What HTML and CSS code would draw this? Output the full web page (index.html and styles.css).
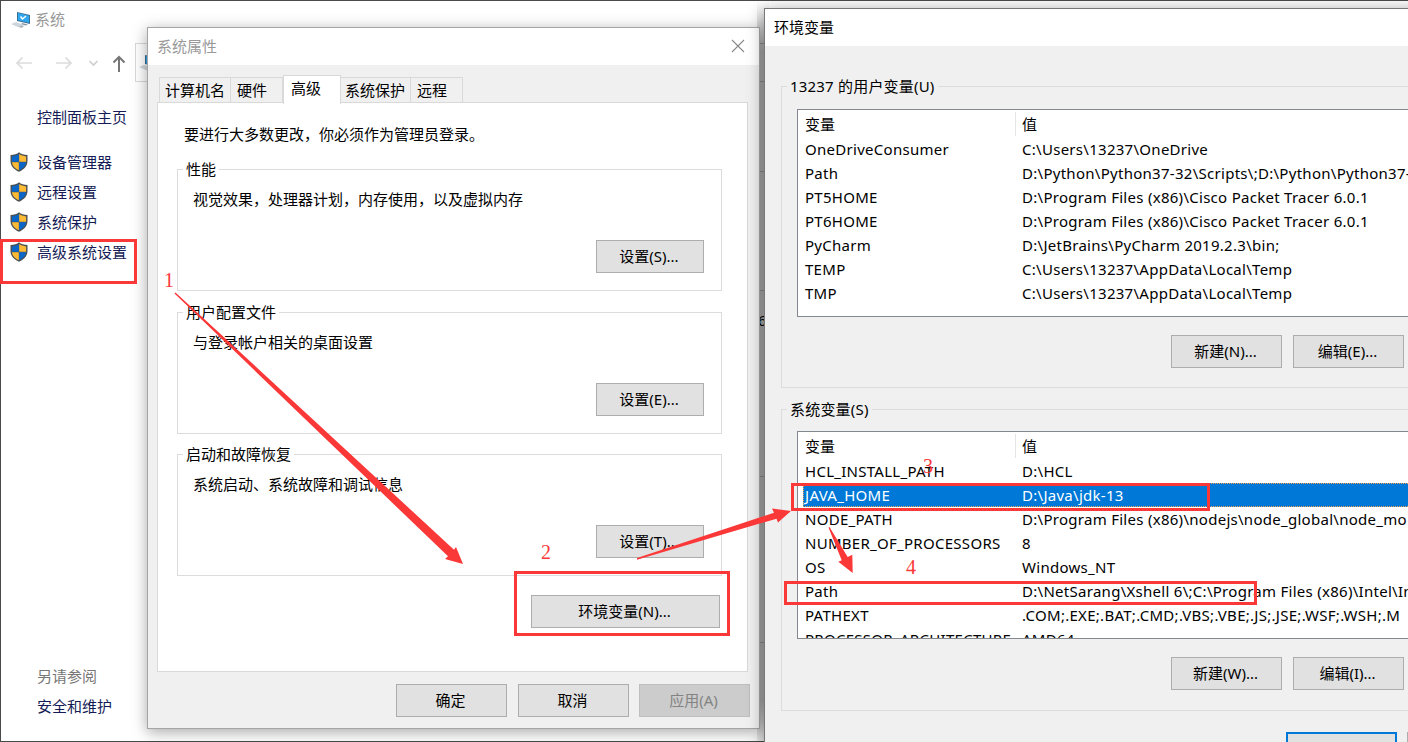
FILE: index.html
```html
<!DOCTYPE html>
<html lang="zh-CN">
<head>
    <meta charset="UTF-8">
    <title>环境变量</title>
    <link rel="stylesheet" href="styles.css">
</head>
<body>

    <svg class="defs" width="0" height="0">
        <symbol id="pc" viewBox="0 0 20 18">
            <path d="M6 1l13 3v9L6 10z" fill="#3a6f96"/>
            <path d="M7 2l11 2.700v7L7 9.200z" fill="#2fa8f0"/>
            <path d="M9.500 5.500l2 2.500 3.500-3" fill="none" stroke="#fff" stroke-width="1.500"/>
            <path d="M11 12l6 1.500-2 1-5-1z" fill="#8b98a3"/>
            <path d="M0 13l5-2 8 3-5 2.500z" fill="#cfd6db"/>
            <path d="M8 15.500l3-1 2 1-3 1.500z" fill="#aab3bb"/>
        </symbol>
        <symbol id="shield" viewBox="0 0 18 20">
            <path d="M9 .300C7 2.100 4 3 .500 3.100V9c0 5 3.500 8.500 8.500 10.800C14 17.500 17.500 14 17.500 9V3.100C14 3 11 2.100 9 .300z" fill="#4d5052"/>
            <path d="M8.800 2C7 3.300 4.500 4.200 1.900 4.400v5.400h6.900z" fill="#0a66c8"/>
            <path d="M9.200 2c1.800 1.300 4.300 2.200 6.900 2.400v5.400H9.200z" fill="#fdbb35"/>
            <path d="M1.900 10.200c.4 3.600 2.900 6.200 6.900 8.100v-8.100z" fill="#fdbb35"/>
            <path d="M16.100 10.200c-.4 3.600-2.900 6.200-6.900 8.100v-8.100z" fill="#0a66c8"/>
        </symbol>
    </svg>

    <!-- 系统 -->
    <div class="window sistema">
        <header class="titulo">
            <svg class="pc"><use href="#pc"/></svg>
            <span>系统</span>
        </header>
        <nav class="nav">
            <svg width="118" height="20" fill="none" stroke-width="1.700">
                <path d="M31 10H16M21.500 4.500L16 10l5.500 5.500M55 10h15M64.500 4.500L70 10l-5.500 5.500" stroke="#dcdcdc"/>
                <path d="M88.500 8l4 4 4-4" stroke="#cfcfcf"/>
            </svg>
            <svg class="subir" width="16" height="20" fill="none" stroke="#777" stroke-width="2">
                <path d="M8 19V4M2.500 9.500L8 4l5.500 5.500"/>
            </svg>
            <div class="direccion"><svg class="pc"><use href="#pc"/></svg></div>
        </nav>
        <div class="lateral">
            <a class="inicio">控制面板主页</a>
            <a><svg class="escudo"><use href="#shield"/></svg>设备管理器</a>
            <a><svg class="escudo"><use href="#shield"/></svg>远程设置</a>
            <a><svg class="escudo"><use href="#shield"/></svg>系统保护</a>
            <a><svg class="escudo"><use href="#shield"/></svg>高级系统设置</a>
            <p>另请参阅</p>
            <a class="suelto">安全和维护</a>
        </div>
        <div class="fondo">
            <i class="l1"></i><i class="l2"></i><i class="l3"></i><i class="l4"></i>
            <b>6</b>
            <i class="l5"></i><i class="l6"></i>
        </div>
    </div>

    <!-- 系统属性 -->
    <div class="window propiedades">
        <header class="titulo">
            <span>系统属性</span>
            <svg width="14" height="14" stroke="#888" stroke-width="1.100"><path d="M1 1l12 12M13 1L1 13"/></svg>
        </header>
        <div class="tabs">
            <span class="t1">计算机名</span>
            <span class="t2">硬件</span>
            <span class="activo">高级</span>
            <span class="t4">系统保护</span>
            <span class="t5">远程</span>
        </div>
        <div class="panel">
            <p class="aviso">要进行大多数更改，你必须作为管理员登录。</p>
            <fieldset>
                <legend>性能</legend>
                <p>视觉效果，处理器计划，内存使用，以及虚拟内存</p>
                <button>设置(S)...</button>
            </fieldset>
            <fieldset>
                <legend>用户配置文件</legend>
                <p>与登录帐户相关的桌面设置</p>
                <button>设置(E)...</button>
            </fieldset>
            <fieldset>
                <legend>启动和故障恢复</legend>
                <p>系统启动、系统故障和调试信息</p>
                <button>设置(T)...</button>
            </fieldset>
            <button class="entorno">环境变量(N)...</button>
        </div>
        <footer>
            <button>确定</button>
            <button>取消</button>
            <button disabled>应用(A)</button>
        </footer>
    </div>

    <!-- 环境变量 -->
    <div class="window variables">
        <header class="titulo"><span>环境变量</span></header>
        <fieldset>
            <legend>13237 的用户变量(U)</legend>
            <div class="lista">
                <div class="fila cabecera"><span>变量</span><span>值</span></div>
                <div class="fila"><span>OneDriveConsumer</span><span>C:\Users\13237\OneDrive</span></div>
                <div class="fila"><span>Path</span><span>D:\Python\Python37-32\Scripts\;D:\Python\Python37-</span></div>
                <div class="fila"><span>PT5HOME</span><span>D:\Program Files (x86)\Cisco Packet Tracer 6.0.1</span></div>
                <div class="fila"><span>PT6HOME</span><span>D:\Program Files (x86)\Cisco Packet Tracer 6.0.1</span></div>
                <div class="fila"><span>PyCharm</span><span>D:\JetBrains\PyCharm 2019.2.3\bin;</span></div>
                <div class="fila"><span>TEMP</span><span>C:\Users\13237\AppData\Local\Temp</span></div>
                <div class="fila"><span>TMP</span><span>C:\Users\13237\AppData\Local\Temp</span></div>
            </div>
            <div class="botones"><button>新建(N)...</button><button>编辑(E)...</button></div>
        </fieldset>
        <fieldset>
            <legend>系统变量(S)</legend>
            <div class="lista">
                <div class="fila cabecera"><span>变量</span><span>值</span></div>
                <div class="fila"><span>HCL_INSTALL_PATH</span><span>D:\HCL</span></div>
                <div class="fila elegida"><span>JAVA_HOME</span><span>D:\Java\jdk-13</span></div>
                <div class="fila"><span>NODE_PATH</span><span>D:\Program Files (x86)\nodejs\node_global\node_mo</span></div>
                <div class="fila"><span>NUMBER_OF_PROCESSORS</span><span>8</span></div>
                <div class="fila"><span>OS</span><span>Windows_NT</span></div>
                <div class="fila"><span>Path</span><span>D:\NetSarang\Xshell 6\;C:\Program Files (x86)\Intel\In</span></div>
                <div class="fila"><span>PATHEXT</span><span>.COM;.EXE;.BAT;.CMD;.VBS;.VBE;.JS;.JSE;.WSF;.WSH;.M</span></div>
                <div class="fila"><span>PROCESSOR_ARCHITECTURE</span><span>AMD64</span></div>
            </div>
            <div class="botones"><button>新建(W)...</button><button>编辑(I)...</button></div>
        </fieldset>
        <footer><button class="ok"></button><button></button></footer>
    </div>

    <!-- marcas rojas -->
    <div class="marca m1"></div>
    <div class="marca m2"></div>
    <div class="marca m3"></div>
    <div class="marca m4"></div>
    <svg class="flechas" width="1408" height="742" fill="#fb3838">
        <path d="M174.500 293.500L175.500 292.500 454 549.700 456 547 463 564 445 559 448 556.300z"/>
        <path d="M637 558L774 512.700 772 508.500 791 511 778 522.500 776.500 518.700 637 559.700z"/>
        <path d="M828.500 527.500L829.500 527 847.700 557 852.300 554.700 852.700 573 838.300 561.700 841.700 560.300z"/>
    </svg>
    <span class="numero n1">1</span>
    <span class="numero n2">2</span>
    <span class="numero n3">3</span>
    <span class="numero n4">4</span>

</body>
</html>
```

FILE: styles.css
```css
@charset "utf-8";

*{    box-sizing: border-box;    margin: 0px;    padding: 0px;}

body{
    position: relative;
    width: 1408px;
    height: 742px;
    overflow: hidden;
    background: #4a4a4c;
    font: 15px/20px "Noto Sans", "Noto Sans CJK SC", sans-serif;
    color: #000;
}

p, span, a, legend, button{    white-space: nowrap;}

.defs{    position: absolute;}

.window{
    position: absolute;
    overflow: hidden;
}

.titulo{
    display: flex;
    align-items: center;
    background: #fff;
    color: #999;
}

.titulo span{    padding-bottom: 2px;}

button{
    display: block;
    flex: none;
    width: 111px;
    height: 33px;
    padding: 0 2px 2px 0;
    border: 1px solid #adadad;
    background: #e1e1e1;
    font: inherit;
    color: #000;
}

button:disabled{
    border-color: #bfbfbf;
    background: #ccc;
    color: #838383;
}

fieldset{
    min-width: 0;
    border: 1px solid #dcdcdc;
}

/* ventana del sistema */
.sistema{
    left: 1px;
    top: 1px;
    width: 1407px;
    height: 740px;
    background: #fff;
}

.sistema .titulo{
    height: 38px;
    padding-left: 10px;
    gap: 4px;
}

.pc{    width: 20px;    height: 18px;}

.nav{
    display: flex;
    align-items: center;
    height: 47px;
}

.subir{    margin-left: -8px;}

.direccion{
    width: 700px;
    height: 39px;
    margin-left: 8px;
    padding: 10px 3px;
    border: 1px solid #d9d9d9;
}

.lateral{
    display: flex;
    flex-direction: column;
    padding-left: 9px;
    color: #151c55;
}

.lateral a{
    display: flex;
    align-items: center;
    gap: 9px;
    height: 30px;
}

.lateral .inicio{
    margin: 16px 0 15px;
    padding-left: 27px;
}

.lateral p{
    margin-top: 399px;
    padding-left: 27px;
    color: #777;
}

.lateral .suelto{
    margin-top: 5px;
    padding-left: 27px;
}

.escudo{    width: 18px;    height: 20px;    margin-top: -1px;}

.fondo{
    position: absolute;
    left: 756px;
    top: 0;
    width: 12px;
    height: 740px;
    background: linear-gradient(#fff, #bcbcbc 50px, #bcbcbc 700px, #f2f2f2 740px);
}

.fondo i{
    display: block;
    height: 1px;
    background: #999;
}

.fondo b{
    display: block;
    height: 20px;
    margin: 19px 0 146px 1px;
    font-weight: normal;
}

.fondo .l1{    margin-top: 42px;}
.fondo .l2{    margin-top: 37px;}
.fondo .l3{    margin-top: 89px;}
.fondo .l4{    margin-top: 118px;}
.fondo .l6{    margin-top: 165px;}

/* propiedades */
.propiedades{
    left: 147px;
    top: 27px;
    width: 613px;
    height: 702px;
    border: 1px solid #a5a5a5;
    background: #f0f0f0;
    box-shadow: 0 3px 14px rgba(0,0,0,.35);
}

.propiedades .titulo{
    justify-content: space-between;
    height: 37px;
    padding: 0 14px 0 9px;
}

.propiedades .titulo svg{    margin-top: -1px;}

.tabs{
    display: flex;
    align-items: flex-end;
    height: 38px;
    padding-left: 11px;
}

.tabs span{
    height: 26px;
    padding: 2px 0 0 6px;
    border: 1px solid #d9d9d9;
    border-width: 1px 1px 0 0;
}

.tabs .t1{    width: 72px;    border-left-width: 1px;    padding-left: 5px;}
.tabs .t2{    width: 52px;}
.tabs .activo{
    position: relative;
    width: 58px;
    height: 29px;
    margin-bottom: -1px;
    padding-left: 7px;
    border-left-width: 1px;
    background: #fff;
}
.tabs .t4{    width: 70px;    padding-left: 4px;}
.tabs .t5{    width: 52px;}

.panel{
    width: 591px;
    height: 570px;
    margin-left: 9px;
    margin-top: -1px;
    padding: 21px 25px 0 19px;
    border: 1px solid #d9d9d9;
    background: #fff;
}

.panel .aviso{    margin: 0 0 15px 7px;}

.panel fieldset{
    height: 132px;
    margin-bottom: 11px;
    padding-left: 15px;
}

.panel fieldset + fieldset{    margin-bottom: 10px;}

.panel legend{
    margin-left: -10px;
    padding: 0 3px;
    height: 20px;
}

.panel fieldset p{    margin: 10px 0 31px;}

.panel fieldset button{
    width: 108px;
    margin-left: 403px;
}

.panel .entorno{
    width: 189px;
    margin: 19px 0 0 354px;
}

.propiedades footer{
    display: flex;
    gap: 11px;
    margin: 12px 0 0 248px;
}

.propiedades footer button:last-child{    margin-left: -1px;}

/* variables de entorno */
.variables{
    left: 764px;
    top: 8px;
    width: 660px;
    height: 750px;
    border: 1px solid #777;
    background: #f0f0f0;
    box-shadow: 0 3px 16px rgba(0,0,0,.4);
}

.variables .titulo{
    height: 37px;
    padding-left: 9px;
    color: #000;
}

.variables fieldset{
    width: 680px;
    height: 312px;
    margin: 30px 0 0 16px;
    padding-left: 15px;
}

.variables fieldset + fieldset{    margin-top: 11px;}

.variables legend{
    height: 20px;
    margin-left: -10px;
    padding: 0 3px;
    letter-spacing: .2px;
}

.lista{
    width: 700px;
    height: 208px;
    margin-top: 13px;
    padding-left: 5px;
    overflow: hidden;
    border: 1px solid #828790;
    background: #fff;
}

fieldset + fieldset .lista{    margin-top: 12px;}

.fila{
    display: grid;
    grid-template-columns: 217px 1fr;
    height: 24px;
    padding-left: 2px;
    line-height: 24px;
    letter-spacing: .28px;
}

.cabecera{
    height: 27px;
    padding-top: 2px;
    letter-spacing: 0;
}

.cabecera span + span{
    height: 24px;
    margin-left: -7px;
    padding-left: 6px;
    border-left: 1px solid #e5e5e5;
}

.elegida{
    outline: 1px dotted #f0a050;
    outline-offset: -1px;
    background: #0078d7;
    color: #fff;
}

.botones{
    display: flex;
    gap: 11px;
    margin: 18px 0 0 374px;
}

.variables footer{
    display: flex;
    gap: 10px;
    margin: 21px 0 0 521px;
}

.variables .ok{    border: 2px solid #0078d7;}

/* marcas */
.marca{
    position: absolute;
    border: 3px solid #fb3838;
}

.m1{    left: 0;    top: 239px;    width: 137px;    height: 45px;}
.m2{    left: 514px;    top: 571px;    width: 216px;    height: 65px;}
.m3{    left: 791px;    top: 483px;    width: 419px;    height: 28px;}
.m4{    left: 784px;    top: 581px;    width: 473px;    height: 24px;}

.flechas{
    position: absolute;
    left: 0;
    top: 0;
}

.numero{
    position: absolute;
    font: 20px/20px "Liberation Serif", serif;
    color: #fb3838;
}

.n1{    left: 164px;    top: 270px;}
.n2{    left: 541px;    top: 542px;}
.n3{    left: 923px;    top: 456px;}
.n4{    left: 906px;    top: 557px;}
```
